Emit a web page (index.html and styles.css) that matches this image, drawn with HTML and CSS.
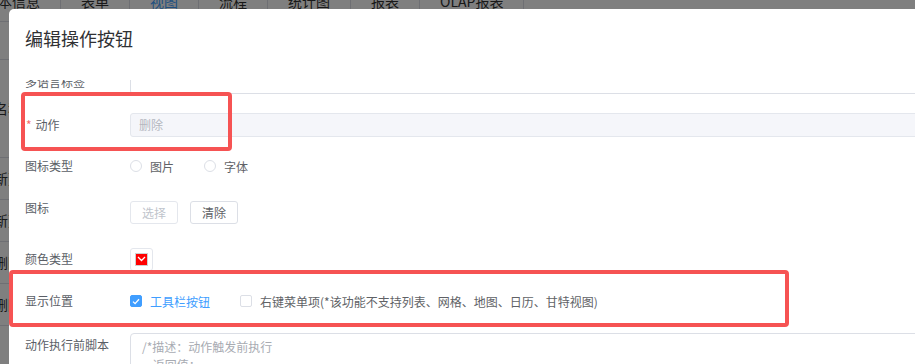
FILE: index.html
```html
<!DOCTYPE html>
<html lang="zh-CN">
<head>
    <meta charset="UTF-8">
    <meta name="viewport" content="width=device-width, initial-scale=1.0">
    <title>编辑操作按钮</title>
    <link rel="stylesheet" href="styles.css">
</head>
<body>
    <div class="page">
        <div class="tabs">
            <span class="tab">基本信息</span>
            <span class="tab">表单</span>
            <span class="tab active">视图</span>
            <span class="tab">流程</span>
            <span class="tab">统计图</span>
            <span class="tab">报表</span>
            <span class="tab">OLAP报表</span>
        </div>
        <div class="list">
            <div class="list-row head"></div>
            <div class="list-row tall">名称</div>
            <div class="list-row">新建_</div>
            <div class="list-row">新建_</div>
            <div class="list-row">删除_</div>
            <div class="list-row">删除_</div>
        </div>
    </div>

    <div class="mask"></div>

    <div class="dialog">
        <div class="dialog-header">
            <h2>编辑操作按钮</h2>
        </div>
        <div class="dialog-body">
            <form class="form">
                <div class="form-row">
                    <label class="form-label">多语言标签</label>
                    <div class="form-field"><div class="input"></div></div>
                </div>
                <div class="form-row gap-19">
                    <label class="form-label"><span class="star">*</span>动作</label>
                    <div class="form-field"><div class="input disabled">删除</div></div>
                </div>
                <div class="form-row gap-17">
                    <label class="form-label">图标类型</label>
                    <div class="form-field">
                        <span class="choice"><span class="radio"></span>图片</span>
                        <span class="choice"><span class="radio"></span>字体</span>
                    </div>
                </div>
                <div class="form-row gap-23 short">
                    <label class="form-label top">图标</label>
                    <div class="form-field">
                        <button type="button" class="btn" disabled>选择</button>
                        <button type="button" class="btn">清除</button>
                    </div>
                </div>
                <div class="form-row gap-23 short">
                    <label class="form-label">颜色类型</label>
                    <div class="form-field">
                        <span class="color-picker">
                            <span class="color-swatch">
                                <svg width="9" height="6" viewBox="0 0 9 6"><path d="M1 1 L4.5 4.5 L8 1" fill="none" stroke="#fff" stroke-width="1.3"/></svg>
                            </span>
                        </span>
                    </div>
                </div>
                <div class="form-row gap-18">
                    <label class="form-label">显示位置</label>
                    <div class="form-field">
                        <span class="choice checked">
                            <span class="checkbox on">
                                <svg width="8" height="7" viewBox="0 0 8 7"><path d="M1 3.6 L3.1 5.6 L7 1.2" fill="none" stroke="#fff" stroke-width="1.3"/></svg>
                            </span>工具栏按钮
                        </span>
                        <span class="choice"><span class="checkbox"></span>右键菜单项(*该功能不支持列表、网格、地图、日历、甘特视图)</span>
                    </div>
                </div>
                <div class="form-row gap-20 tall-row">
                    <label class="form-label top script">动作执行前脚本</label>
                    <div class="form-field">
                        <div class="textarea">/*描述：动作触发前执行
    返回值：
    true - 继续执行</div>
                    </div>
                </div>
            </form>
        </div>
    </div>

    <div class="mark mark-action"></div>
    <div class="mark mark-position"></div>
</body>
</html>
```

FILE: styles.css
```css
/* Base */
* { box-sizing: border-box; margin: 0; padding: 0; }
html, body { width: 100%; height: 100%; overflow: hidden; }
body { font-family: "Noto Sans CJK SC", "Liberation Sans", sans-serif; font-size: 12px; color: #606266; background: #fff; position: relative; }

/* Page behind the dialog */
.page { margin-left: -36px; margin-top: -14px; }
.tabs { display: flex; height: 36px; border-bottom: 1px solid #dcdfe6; }
.tab { padding: 0 20px; font-size: 14px; line-height: 30px; color: #333; border-right: 1px solid #dcdfe6; white-space: nowrap; }
.tab.active { color: #409eff; }
.list { display: flex; flex-direction: column; width: 120px; }
.list-row { height: 42px; line-height: 41px; padding-left: 30px; font-size: 14px; color: #333; border-bottom: 1px solid #dcdfe6; }
.list-row.head { height: 38px; }
.list-row.tall { height: 98px; line-height: 97px; }

.mask { position: absolute; top: 0; left: 0; width: 100%; height: 100%; background: rgba(0, 0, 0, 0.5); }

/* Dialog */
.dialog { position: absolute; left: 9px; top: 9px; width: 1000px; height: 420px; background: #fff; border-radius: 5px; display: flex; flex-direction: column; }
.dialog-header { height: 71px; padding: 19px 16px 0; flex-shrink: 0; }
.dialog-header h2 { font-size: 18px; line-height: 20px; font-weight: normal; color: #303133; }
.dialog-body { flex: 1; overflow: hidden; }

.form { margin-top: -10px; padding-left: 16px; }
.form-row { display: flex; align-items: center; min-height: 24px; }
.form-row.short { min-height: 23px; }
.form-row.tall-row { align-items: flex-start; }
.gap-17 { margin-top: 17px; }
.gap-18 { margin-top: 18px; }
.gap-19 { margin-top: 19px; }
.gap-20 { margin-top: 20px; }
.gap-23 { margin-top: 23px; }

.form-label { width: 105px; flex-shrink: 0; line-height: 24px; color: #5a5e66; white-space: nowrap; }
.form-label.top { align-self: flex-start; line-height: 14px; }
.form-label.script { line-height: 24px; }
.star { color: #f56c6c; margin-right: 4px; margin-left: 1px; }
.form-field { flex: 1; display: flex; align-items: center; }

.input { flex: 1; height: 24px; line-height: 22px; padding: 0 8px; border: 1px solid #dcdfe6; border-radius: 3px; background: #fff; }
.input.disabled { background: #f5f6fa; border-color: #e4e7ed; color: #b4b7bf; }

.choice { display: inline-flex; align-items: center; margin-right: 30px; color: #606266; white-space: nowrap; }
.choice.checked { color: #409eff; }
.radio { width: 12px; height: 12px; border: 1px solid #dcdfe6; border-radius: 50%; margin-right: 8px; }
.checkbox { width: 12px; height: 12px; border: 1px solid #dcdfe6; border-radius: 2px; margin-right: 8px; display: inline-flex; align-items: center; justify-content: center; }
.checkbox.on { background: #409eff; border-color: #409eff; }

.btn { width: 48px; height: 23px; margin-right: 12px; font-family: inherit; font-size: 12px; color: #606266; background: #fff; border: 1px solid #dcdfe6; border-radius: 3px; }
.btn:disabled { color: #c0c4cc; border-color: #e4e7ed; }

.color-picker { width: 23px; height: 23px; padding: 4px; border: 1px solid #e4e7ed; border-radius: 3px; display: inline-flex; }
.color-swatch { flex: 1; background: #ff0000; border: 1px solid #d0d0d0; display: flex; align-items: center; justify-content: center; }

.textarea { flex: 1; height: 80px; padding: 4px 11px; line-height: 18px; white-space: pre; color: #a8abb2; border: 1px solid #dcdfe6; border-radius: 4px; }

/* Red annotation boxes drawn over the screenshot */
.mark { position: absolute; border: 4px solid #f65353; border-radius: 4px; }
.mark-action { left: 21px; top: 92px; width: 211px; height: 59px; }
.mark-position { left: 9px; top: 270px; width: 780px; height: 57px; }
```
